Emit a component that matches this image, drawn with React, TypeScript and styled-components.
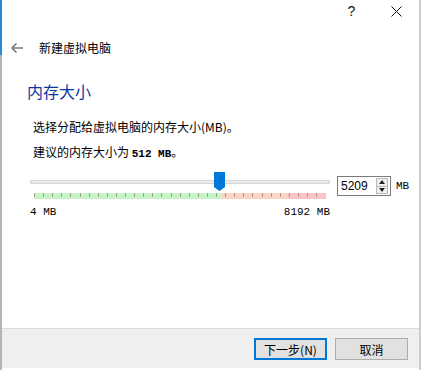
import styled, { createGlobalStyle } from "styled-components";

const GlobalStyle = createGlobalStyle`
	html, body {
		margin: 0;
		padding: 0;
		background: #ffffff;
	}
	body {
		font-family: "Noto Sans CJK SC", "Liberation Sans", sans-serif;
		font-size: 12px;
		color: #000;
	}
`;

const MIN_MB = 4;
const MAX_MB = 8192;
const VALUE_MB = 5209;
const BAND_WIDTH = 292;
const TICK_COUNT = 32;
const TICK_STEP = 9.1;

const Window = styled.div`
	position: relative;
	width: 421px;
	height: 370px;
	box-sizing: border-box;
	border-left: 2px solid #b4b4b4;
	border-right: 2px solid #cdcdcd;
	display: flex;
	flex-direction: column;
	background: #fff;

	&::before {
		content: "";
		position: absolute;
		left: -2px;
		top: 0;
		width: 2px;
		height: 55px;
		background: #2b88d8;
	}
`;

const TitleBar = styled.div`
	height: 36px;
	display: flex;
	justify-content: flex-end;
	align-items: flex-start;
`;

const TitleButton = styled.div`
	width: 45px;
	height: 22px;
	display: flex;
	align-items: center;
	justify-content: center;
	font-family: "Liberation Sans", sans-serif;
	font-size: 14px;
	color: #111;
`;

const NavRow = styled.div`
	height: 24px;
	display: flex;
	align-items: center;
	padding-left: 8px;
	gap: 15px;
`;

const NavTitle = styled.span`
	font-size: 12px;
	line-height: 24px;
`;

const Content = styled.div`
	flex: 1;
	padding-left: 25px;
	display: flex;
	flex-direction: column;
`;

const Heading = styled.h2`
	margin: 20px 0 0;
	font-size: 16px;
	line-height: 22px;
	font-weight: 400;
	color: #0a36a6;
`;

const Para = styled.p<{ $top: number }>`
	margin: ${(p) => p.$top}px 0 0 6px;
	font-size: 12px;
	line-height: 20px;
`;

const Strong = styled.b`
	font-family: "Liberation Mono", monospace;
	font-size: 11px;
	font-weight: 700;
`;

const SliderRow = styled.div`
	margin-top: 6px;
	margin-left: 3px;
	display: flex;
	align-items: flex-start;
`;

const SliderBlock = styled.div`
	position: relative;
	width: 300px;
	display: flex;
	flex-direction: column;
`;

const Groove = styled.div`
	margin-top: 10px;
	height: 4px;
	background: #e7eaea;
	border: 1px solid #d6d6d6;
	box-sizing: border-box;
`;

const Handle = styled.svg`
	position: absolute;
	top: 2px;
	width: 11px;
	height: 19px;
`;

const Band = styled.svg`
	margin-top: 9px;
	margin-left: 4px;
	display: block;
`;

const Labels = styled.div`
	margin-top: 6px;
	display: flex;
	justify-content: space-between;
	font-family: "Liberation Mono", monospace;
	font-size: 11px;
	line-height: 14px;
`;

const SpinBox = styled.div`
	margin: 6px 0 0 7px;
	width: 54px;
	height: 20px;
	box-sizing: border-box;
	border: 1px solid #7a7a7a;
	display: flex;
	align-items: center;
	justify-content: space-between;
	padding: 0 2px 0 3px;
	font-family: "Liberation Sans", sans-serif;
	font-size: 12px;
`;

const Spinner = styled.div`
	width: 12px;
	height: 16px;
	display: flex;
	flex-direction: column;
	border: 1px solid #b8b8b8;
	box-sizing: border-box;
	background: #f0f0f0;
`;

const SpinHalf = styled.div`
	flex: 1;
	display: flex;
	align-items: center;
	justify-content: center;
	& + & {
		border-top: 1px solid #b8b8b8;
	}
`;

const Unit = styled.span`
	margin: 8px 0 0 5px;
	font-family: "Liberation Mono", monospace;
	font-size: 11px;
	line-height: 16px;
`;

const Footer = styled.div`
	height: 40px;
	margin-bottom: 2px;
	box-sizing: border-box;
	background: #efefef;
	border-top: 1px solid #dadada;
	display: flex;
	justify-content: flex-end;
	align-items: flex-start;
	padding: 9px 11px 0 0;
	gap: 8px;
`;

const Button = styled.button<{ $primary?: boolean }>`
	width: 73px;
	height: 22px;
	box-sizing: border-box;
	background: #e1e1e1;
	border: ${(p) => (p.$primary ? "2px solid #0078d7" : "1px solid #adadad")};
	font-family: "Noto Sans CJK SC", "Liberation Mono", sans-serif;
	font-size: 12px;
	padding: 0;
	color: #000;
`;

const Arrow = () => (
	<svg width="14" height="12" viewBox="0 0 14 12">
		<path d="M13 6H2M6.5 1.5L2 6l4.5 4.5" stroke="#7a7a7a" strokeWidth="1.6" fill="none" />
	</svg>
);

const Close = () => (
	<svg width="11" height="11" viewBox="0 0 11 11">
		<path d="M0.5 0.5l10 10M10.5 0.5l-10 10" stroke="#111" strokeWidth="1" />
	</svg>
);

const Tri = ({ up }: { up?: boolean }) => (
	<svg width="6" height="4" viewBox="0 0 6 4">
		<path d={up ? "M0 4L3 0L6 4Z" : "M0 0L3 4L6 0Z"} fill="#222" />
	</svg>
);

const TickBand = () => {
	const green = 188;
	const peach = 254;
	const ticks = Array.from({ length: TICK_COUNT }, (_, i) => Math.round(i * TICK_STEP) + 0.5);
	return (
		<Band width={BAND_WIDTH} height={6}>
			<rect x="0" y="0" width={green} height="6" fill="#c5f5c5" />
			<rect x={green} y="0" width={peach - green} height="6" fill="#fbd6c4" />
			<rect x={peach} y="0" width={BAND_WIDTH - peach} height="6" fill="#fcc5c5" />
			{ticks.map((x) => (
				<line key={x} x1={x} x2={x} y1="0" y2="4" stroke="#a39b94" strokeWidth="1" />
			))}
		</Band>
	);
};

export default function App() {
	const pos = 4 + ((VALUE_MB - MIN_MB) / (MAX_MB - MIN_MB)) * BAND_WIDTH;
	return (
		<>
			<GlobalStyle />
			<Window>
				<TitleBar>
					<TitleButton>?</TitleButton>
					<TitleButton>
						<Close />
					</TitleButton>
				</TitleBar>
				<NavRow>
					<Arrow />
					<NavTitle>新建虚拟电脑</NavTitle>
				</NavRow>
				<Content>
					<Heading>内存大小</Heading>
					<Para $top={15}>选择分配给虚拟电脑的内存大小(MB)。</Para>
					<Para $top={5}>
						建议的内存大小为 <Strong>512 MB</Strong>。
					</Para>
					<SliderRow>
						<SliderBlock>
							<Groove />
							<Handle viewBox="0 0 11 19" style={{ left: pos - 5.5 }}>
								<path d="M0 0H11V15L5.5 19L0 15Z" fill="#0078d7" />
							</Handle>
							<TickBand />
							<Labels>
								<span>4 MB</span>
								<span>8192 MB</span>
							</Labels>
						</SliderBlock>
						<SpinBox>
							<span>{VALUE_MB}</span>
							<Spinner>
								<SpinHalf>
									<Tri up />
								</SpinHalf>
								<SpinHalf>
									<Tri />
								</SpinHalf>
							</Spinner>
						</SpinBox>
						<Unit>MB</Unit>
					</SliderRow>
				</Content>
				<Footer>
					<Button $primary>下一步(N)</Button>
					<Button>取消</Button>
				</Footer>
			</Window>
		</>
	);
}
